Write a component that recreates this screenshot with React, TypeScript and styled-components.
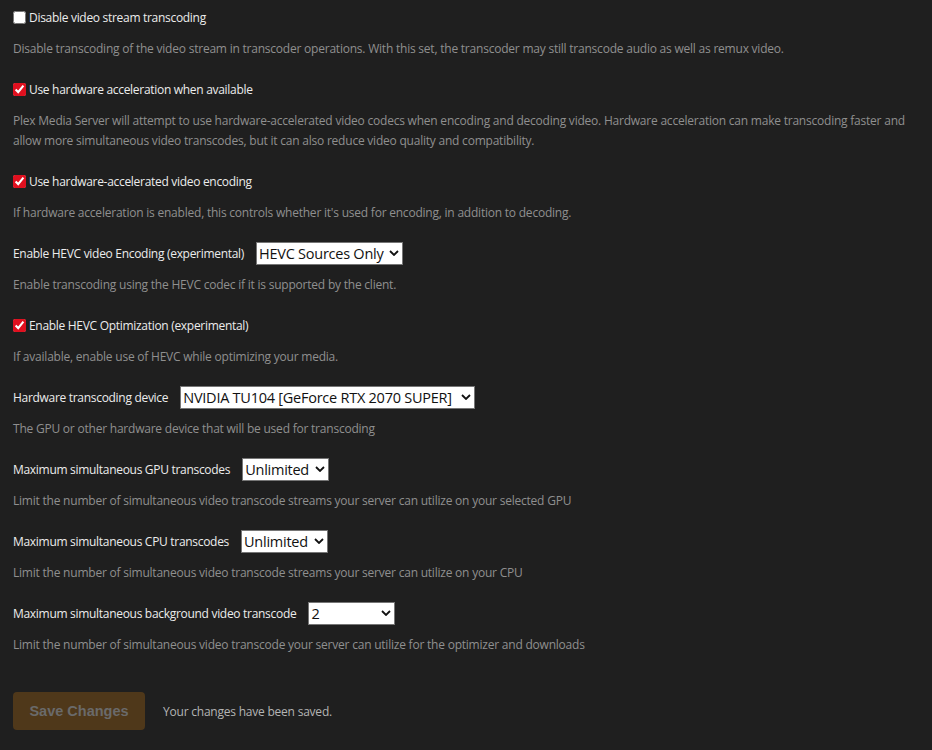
import React, { useState } from "react";
import styled, { createGlobalStyle } from "styled-components";

const GlobalStyle = createGlobalStyle`
    html, body {
        margin: 0;
        padding: 0;
        background-color: #1f1f1f;
    }
    body {
        font-family: "Open Sans", "Noto Sans", sans-serif;
        -webkit-font-smoothing: antialiased;
    }
`;

// --- Page wrapper ---
const Page = styled.div`
    min-height: 750px;
    box-sizing: border-box;
    padding: 6px 13px 0;
    background-color: #1f1f1f;
`;

// --- One setting: control line + help text ---
const SettingGroup = styled.div`
    margin-bottom: 19px;
`;

const CheckRow = styled.label`
    display: flex;
    align-items: center;
    height: 22px;
    cursor: pointer;
`;

const Checkbox = styled.input.attrs({ type: "checkbox" })`
    width: 13px;
    height: 13px;
    margin: 0 3px 0 0;
    accent-color: #e0101f;
    cursor: pointer;
`;

const SelectRow = styled.div`
    display: flex;
    align-items: center;
    height: 22px;
`;

const Label = styled.span`
    font-size: 12px;
    letter-spacing: -0.3px;
    color: #ececec;
    white-space: nowrap;
`;

const FieldLabel = styled(Label)`
    margin-right: 12px;
`;

const Select = styled.select<{ $width: number }>`
    flex-shrink: 0;
    width: ${({ $width }) => $width}px;
    height: 23px;
    box-sizing: border-box;
    border: 1px solid #767676;
    border-radius: 0;
    background-color: #fff;
    color: #111;
    font-family: "Open Sans", "Noto Sans", sans-serif;
    font-size: 14.5px;
    letter-spacing: -0.25px;
    padding: 0 2px;
    appearance: none;
    background-image: url("data:image/svg+xml,%3Csvg xmlns='http://www.w3.org/2000/svg' width='10' height='6' viewBox='0 0 10 6'%3E%3Cpath d='M1 1l4 4 4-4' fill='none' stroke='%23111' stroke-width='1.8'/%3E%3C/svg%3E");
    background-repeat: no-repeat;
    background-position: right 3px center;
    outline: none;
`;

const Help = styled.p`
    margin: 11px 0 0;
    font-size: 12px;
    letter-spacing: -0.22px;
    line-height: 20px;
    color: #8f8f8f;
`;

// --- Footer with save button ---
const Footer = styled.div`
    display: flex;
    align-items: center;
    gap: 18px;
    margin-top: 37px;
`;

const SaveButton = styled.button`
    width: 132px;
    height: 38px;
    border: none;
    border-radius: 4px;
    background-color: #4f381a;
    color: #6a6a6a;
    font-family: "Liberation Sans", Arial, sans-serif;
    font-weight: bold;
    font-size: 14.5px;
    cursor: default;
`;

const SavedNote = styled.span`
    font-size: 12px;
    letter-spacing: -0.22px;
    color: #b4b4b4;
`;

interface CheckSetting {
    kind: "check";
    id: string;
    label: string;
    help: string;
    checked: boolean;
}

interface SelectSetting {
    kind: "select";
    id: string;
    label: string;
    help: string;
    value: string;
    options: string[];
    width: number;
}

type Setting = CheckSetting | SelectSetting;

const SETTINGS: Setting[] = [
    {
        kind: "check",
        id: "disableVideoTranscode",
        label: "Disable video stream transcoding",
        help: "Disable transcoding of the video stream in transcoder operations. With this set, the transcoder may still transcode audio as well as remux video.",
        checked: false,
    },
    {
        kind: "check",
        id: "hwAccel",
        label: "Use hardware acceleration when available",
        help: "Plex Media Server will attempt to use hardware-accelerated video codecs when encoding and decoding video. Hardware acceleration can make transcoding faster and allow more simultaneous video transcodes, but it can also reduce video quality and compatibility.",
        checked: true,
    },
    {
        kind: "check",
        id: "hwEncode",
        label: "Use hardware-accelerated video encoding",
        help: "If hardware acceleration is enabled, this controls whether it's used for encoding, in addition to decoding.",
        checked: true,
    },
    {
        kind: "select",
        id: "hevcEncoding",
        label: "Enable HEVC video Encoding (experimental)",
        help: "Enable transcoding using the HEVC codec if it is supported by the client.",
        value: "HEVC Sources Only",
        options: ["Never", "HEVC Sources Only", "Always"],
        width: 147,
    },
    {
        kind: "check",
        id: "hevcOptimize",
        label: "Enable HEVC Optimization (experimental)",
        help: "If available, enable use of HEVC while optimizing your media.",
        checked: true,
    },
    {
        kind: "select",
        id: "hwDevice",
        label: "Hardware transcoding device",
        help: "The GPU or other hardware device that will be used for transcoding",
        value: "NVIDIA TU104 [GeForce RTX 2070 SUPER]",
        options: ["Auto", "NVIDIA TU104 [GeForce RTX 2070 SUPER]"],
        width: 295,
    },
    {
        kind: "select",
        id: "gpuLimit",
        label: "Maximum simultaneous GPU transcodes",
        help: "Limit the number of simultaneous video transcode streams your server can utilize on your selected GPU",
        value: "Unlimited",
        options: ["Unlimited", "1", "2", "3", "4"],
        width: 87,
    },
    {
        kind: "select",
        id: "cpuLimit",
        label: "Maximum simultaneous CPU transcodes",
        help: "Limit the number of simultaneous video transcode streams your server can utilize on your CPU",
        value: "Unlimited",
        options: ["Unlimited", "1", "2", "3", "4"],
        width: 87,
    },
    {
        kind: "select",
        id: "backgroundLimit",
        label: "Maximum simultaneous background video transcode",
        help: "Limit the number of simultaneous video transcode your server can utilize for the optimizer and downloads",
        value: "2",
        options: ["1", "2", "3", "4", "Unlimited"],
        width: 87,
    },
];

const SettingItem: React.FC<{ setting: Setting }> = ({ setting }) => {
    const [checked, setChecked] = useState(setting.kind === "check" ? setting.checked : false);
    const [value, setValue] = useState(setting.kind === "select" ? setting.value : "");

    return (
        <SettingGroup>
            {setting.kind === "check" ? (
                <CheckRow>
                    <Checkbox checked={checked} onChange={(e) => setChecked(e.target.checked)} />
                    <Label>{setting.label}</Label>
                </CheckRow>
            ) : (
                <SelectRow>
                    <FieldLabel>{setting.label}</FieldLabel>
                    <Select $width={setting.width} value={value} onChange={(e) => setValue(e.target.value)}>
                        {setting.options.map((opt) => (
                            <option key={opt} value={opt}>
                                {opt}
                            </option>
                        ))}
                    </Select>
                </SelectRow>
            )}
            <Help>{setting.help}</Help>
        </SettingGroup>
    );
};

const App: React.FC = () => {
    return (
        <>
            <GlobalStyle />
            <Page>
                {SETTINGS.map((s) => (
                    <SettingItem key={s.id} setting={s} />
                ))}
                <Footer>
                    <SaveButton disabled>Save Changes</SaveButton>
                    <SavedNote>Your changes have been saved.</SavedNote>
                </Footer>
            </Page>
        </>
    );
};

export default App;
